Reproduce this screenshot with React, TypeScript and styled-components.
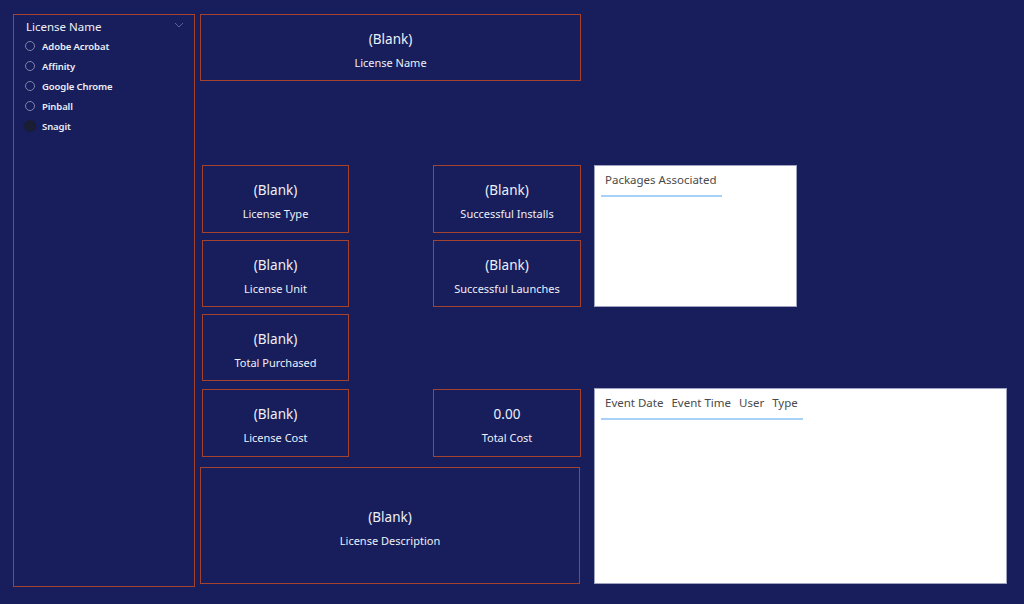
import styled, { createGlobalStyle } from "styled-components";

const GlobalStyle = createGlobalStyle`
    html, body {
        margin: 0;
        padding: 0;
        background-color: #171e5b;
    }
    body {
        font-family: "Segoe UI", "Noto Sans", sans-serif;
        color: #e8e9f3;
    }
`;

const licenses = ["Adobe Acrobat", "Affinity", "Google Chrome", "Pinball", "Snagit"];

interface CardProps {
    value: string;
    label: string;
    col: string;
    row: string;
}

function Card({value, label, col, row}: CardProps) {
    return (
        <CardBox $col={col} $row={row}>
            <CardValue>{value}</CardValue>
            <CardLabel>{label}</CardLabel>
        </CardBox>
    );
}

function App() {
    return (
        <>
            <GlobalStyle/>
            <Page>
                <Slicer>
                    <SlicerHeader>
                        <SlicerTitle>License Name</SlicerTitle>
                        <svg width="10" height="6" viewBox="0 0 10 6">
                            <polyline points="1,1 5,5 9,1" fill="none" stroke="#5b6499" strokeWidth="1"/>
                        </svg>
                    </SlicerHeader>
                    <SlicerList>
                        {licenses.map(name => (
                            <SlicerItem key={name}>
                                <Radio $checked={name === "Snagit"}/>
                                <span>{name}</span>
                            </SlicerItem>
                        ))}
                    </SlicerList>
                </Slicer>
                <Board>
                    <Card value="(Blank)" label="License Name" col="1 / 5" row="1"/>
                    <Card value="(Blank)" label="License Type" col="2" row="3"/>
                    <Card value="(Blank)" label="Successful Installs" col="4" row="3"/>
                    <Card value="(Blank)" label="License Unit" col="2" row="5"/>
                    <Card value="(Blank)" label="Successful Launches" col="4" row="5"/>
                    <Card value="(Blank)" label="Total Purchased" col="2" row="7"/>
                    <Card value="(Blank)" label="License Cost" col="2" row="9"/>
                    <Card value="0.00" label="Total Cost" col="4" row="9"/>
                    <DescCard $col="1 / 5" $row="11">
                        <CardValue>(Blank)</CardValue>
                        <CardLabel>License Description</CardLabel>
                    </DescCard>
                    <TablePanel $col="6" $row="3 / 6">
                        <HeaderRow>
                            <HeaderCell>Packages Associated</HeaderCell>
                        </HeaderRow>
                    </TablePanel>
                    <TablePanel $col="6 / 8" $row="9 / 12" $raise>
                        <HeaderRow>
                            <HeaderCell>Event Date</HeaderCell>
                            <HeaderCell>Event Time</HeaderCell>
                            <HeaderCell>User</HeaderCell>
                            <HeaderCell>Type</HeaderCell>
                        </HeaderRow>
                    </TablePanel>
                </Board>
            </Page>
        </>
    );
}

const Page = styled.div`
    display: flex;
    align-items: flex-start;
    gap: 5px;
    padding: 14px 0 0 13px;
    width: 1024px;
    height: 604px;
    box-sizing: border-box;
`

const Slicer = styled.div`
    width: 182px;
    height: 573px;
    box-sizing: border-box;
    border: 1px solid #a3432f;
    padding: 3px 10px 0 11px;
`

const SlicerHeader = styled.div`
    display: flex;
    align-items: center;
    justify-content: space-between;
    height: 16px;
    svg {
        margin-top: -2px;
    }
`

const SlicerTitle = styled.div`
    font-size: 11.5px;
    color: #f0f1f7;
    padding-left: 1px;
`

const SlicerList = styled.div`
    display: flex;
    flex-direction: column;
    margin-top: 2px;
`

const SlicerItem = styled.div`
    display: flex;
    align-items: center;
    gap: 7px;
    height: 20px;
    font-size: 9.5px;
    font-weight: 600;
    letter-spacing: -0.1px;
    color: #eceef6;
`

const Radio = styled.span<{$checked: boolean}>`
    width: 10px;
    height: 10px;
    border-radius: 50%;
    box-sizing: border-box;
    border: 1px solid ${p => p.$checked ? "#1b1d33" : "#7d84ad"};
    background-color: ${p => p.$checked ? "#1b1d33" : "transparent"};
    ${p => p.$checked ? "box-shadow: 0 0 1px 1px #1b1d33;" : ""}
`

const Board = styled.div`
    display: grid;
    grid-template-columns: 2px 147px 84px 148px 13px 203px 210px;
    grid-template-rows: 67px 84px 68px 7px 67px 7px 67px 8px 68px 10px 117px;
`

const CardBox = styled.div<{$col: string; $row: string}>`
    grid-column: ${p => p.$col};
    grid-row: ${p => p.$row};
    border: 1px solid #a3432f;
    display: flex;
    flex-direction: column;
    align-items: center;
    justify-content: center;
    gap: 8px;
    padding-top: 4px;
`

const DescCard = styled(CardBox)`
    margin-right: 1px;
`

const CardValue = styled.div`
    font-size: 13.5px;
    color: #eef0f8;
    line-height: 18px;
`

const CardLabel = styled.div`
    font-size: 11px;
    color: #eef0f8;
    line-height: 14px;
`

const TablePanel = styled.div<{$col: string; $row: string; $raise?: boolean}>`
    grid-column: ${p => p.$col};
    grid-row: ${p => p.$row};
    background-color: #ffffff;
    border: 1px solid #9ea3c4;
    margin-top: ${p => p.$raise ? "-1px" : "0"};
    padding: 6px 0 0 6px;
    box-sizing: border-box;
`

const HeaderRow = styled.div`
    display: flex;
    width: fit-content;
    border-bottom: 2px solid #a7d1f6;
    padding-right: 1px;
`

const HeaderCell = styled.div`
    font-size: 11.5px;
    line-height: 16px;
    color: #4a4a4a;
    padding: 0 4px 7px 4px;
`

export default App;
